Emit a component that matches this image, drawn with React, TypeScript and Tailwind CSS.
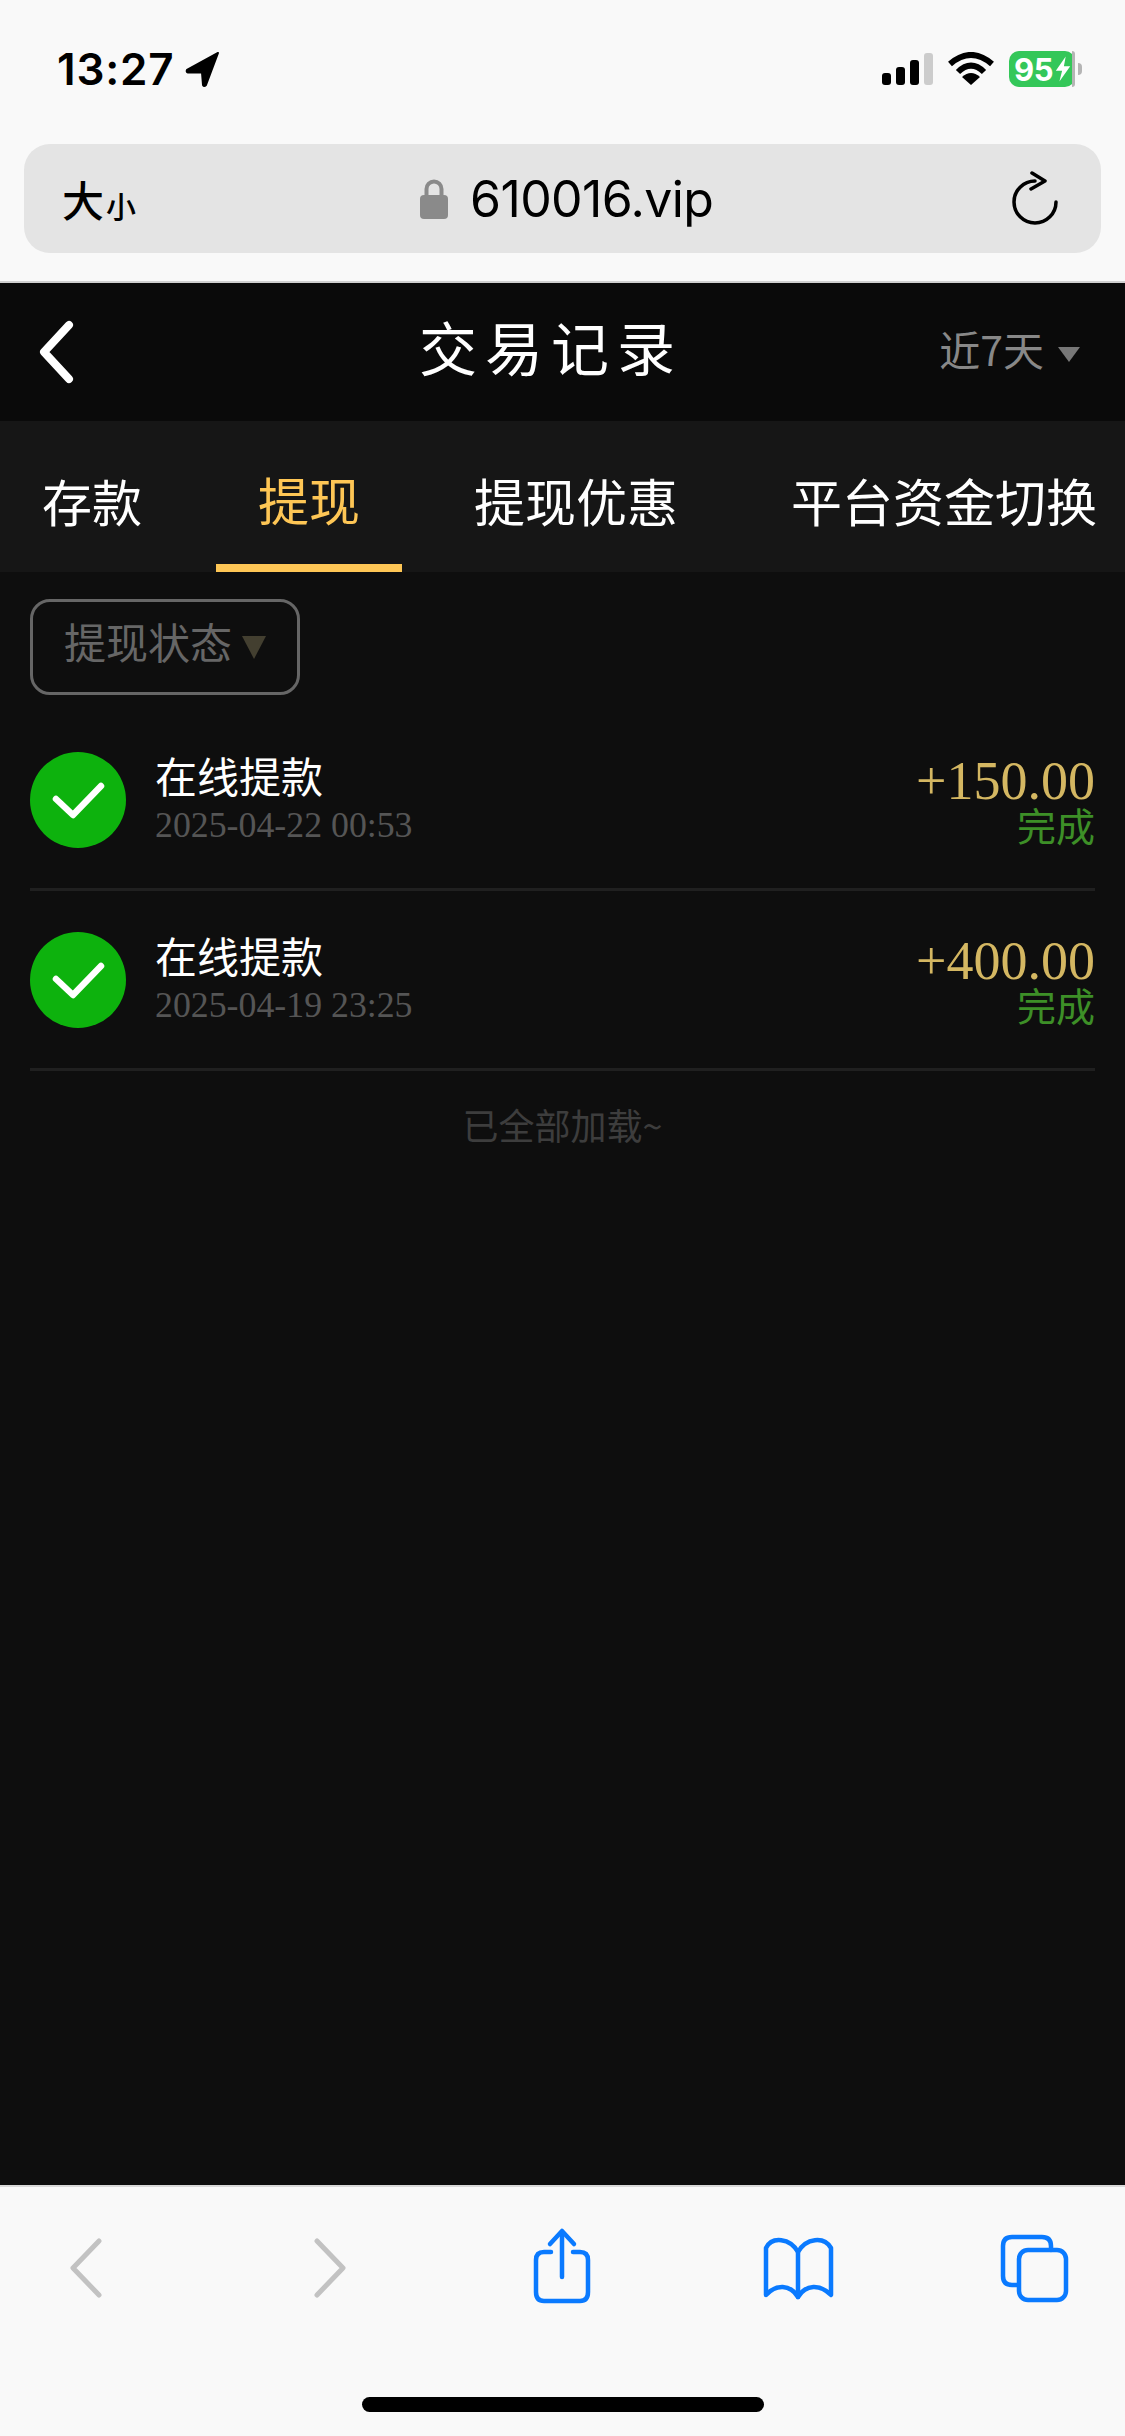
import React from "react";

const SANS = "font-['Noto_Sans_CJK_SC',sans-serif]";
const SERIF = "font-['Liberation_Serif','Noto_Sans_CJK_SC',serif]";

function StatusBar() {
  return (
    <div className="h-[144px] flex justify-between items-start pl-[57px] pr-[43px] pt-[51px]">
      <div className="flex items-center h-[36px] gap-[11px]">
        <span className="font-['Inter',sans-serif] text-[44px] leading-none font-semibold text-black tracking-[0.8px]">13:27</span>
        <svg width="36" height="36" viewBox="0 0 36 36" className="block">
          <path d="M33 2 L2 19 Q1 21 3 21.5 L17 21.5 L18 34 Q19 36 21 34 Z" fill="#000" stroke="#000" strokeWidth="2" strokeLinejoin="round" />
        </svg>
      </div>
      <div className="flex items-center h-[36px]">
        <svg width="52" height="34" viewBox="0 0 52 34" className="block mr-[15px]">
          <rect x="1" y="21" width="9" height="12" rx="3" fill="#000" />
          <rect x="15" y="15" width="9" height="18" rx="3" fill="#000" />
          <rect x="29" y="8" width="9" height="25" rx="3" fill="#000" />
          <rect x="43" y="1" width="9" height="32" rx="3" fill="#ccc" />
        </svg>
        <svg width="46" height="34" viewBox="0 0 46 34" className="block mr-[15px]">
          <path d="M2 12 Q23 -6 44 12" fill="none" stroke="#000" strokeWidth="6" />
          <path d="M10 20 Q23 7 36 20" fill="none" stroke="#000" strokeWidth="6" />
          <path d="M23 33 L14 25 Q23 17 32 25 Z" fill="#000" />
        </svg>
        <div className="relative w-[66px] h-[36px] rounded-[10px] bg-[#34c759] flex items-center pl-[5px]">
          <span className="font-['Inter',sans-serif] font-bold text-[31px] leading-none text-white tracking-[-0.5px]">95</span>
          <svg width="18" height="30" viewBox="0 0 20 30" className="block ml-[1px]">
            <path d="M13 1 L2 17 L9 17 L6 29 L18 12 L11 12 Z" fill="#fff" />
          </svg>
          <div className="absolute right-0 top-0 w-[3px] h-full rounded-r-[10px] bg-[#b5b5b5]" />
        </div>
        <div className="w-[4px] h-[12px] ml-[3px] rounded-r-full bg-[#b5b5b5]" />
      </div>
    </div>
  );
}

function UrlBar() {
  return (
    <div className="mx-[24px] h-[109px] rounded-[26px] bg-[#e4e4e4] flex items-center justify-between pl-[38px] pr-[42px] relative">
      <div className={`flex items-end text-black ${SANS} font-medium`}>
        <span className="text-[42px] leading-none">大</span>
        <span className="text-[30px] leading-none ml-[2px]">小</span>
      </div>
      <div className="flex items-center gap-[21px] absolute left-[395px] top-[27px]">
        <svg width="30" height="42" viewBox="0 0 30 42" className="block">
          <path d="M7.5 20 V11 a7.5 7.5 0 0 1 15 0 V20" fill="none" stroke="#8a8a8a" strokeWidth="4" />
          <rect x="1" y="17" width="28" height="24" rx="4" fill="#8a8a8a" />
        </svg>
        <span className="font-['Inter',sans-serif] text-[50px] leading-[56px] text-black tracking-[-0.6px]">610016.vip</span>
      </div>
      <svg width="48" height="56" viewBox="0 0 48 56" className="block">
        <path d="M45 31 A21 21 0 1 1 24 10" fill="none" stroke="#000" strokeWidth="3.5" strokeLinecap="round" />
        <path d="M21 2 L34 10 L20 18" fill="none" stroke="#000" strokeWidth="3.5" strokeLinecap="round" strokeLinejoin="round" />
      </svg>
    </div>
  );
}

function Header() {
  return (
    <div className={`h-[138px] bg-[#0a0a0a] flex items-center justify-between pl-[37px] pr-[45px] relative ${SANS}`}>
      <svg width="40" height="64" viewBox="0 0 40 64" className="block">
        <path d="M32 5 L7 32 L32 59" fill="none" stroke="#fff" strokeWidth="8" strokeLinecap="round" strokeLinejoin="round" />
      </svg>
      <span className="absolute left-[419px] top-[27px] text-[58px] leading-[72px] text-white tracking-[8px] font-normal">交易记录</span>
      <div className="flex items-center gap-[14px]">
        <span className="text-[41px] leading-[56px] text-[#888] mb-[8px]">近7天</span>
        <svg width="22" height="16" viewBox="0 0 22 16" className="block mt-[4px]">
          <path d="M0 1 H22 L11 16 Z" fill="#777" />
        </svg>
      </div>
    </div>
  );
}

function Tabs() {
  return (
    <div className={`h-[151px] bg-[#161616] relative flex items-center text-[51px] leading-[64px] text-white ${SANS}`}>
      <span className="ml-[42px] w-[174px] shrink-0 mt-[6px] text-[50px]">存款</span>
      <div className="w-[186px] shrink-0 h-full flex items-center justify-center text-[#fec655] border-b-[8px] border-[#fec655]">
        <span className="translate-y-[6px]">提现</span>
      </div>
      <span className="ml-[72px] shrink-0 mt-[6px]">提现优惠</span>
      <span className="ml-[113px] shrink-0 mt-[6px]">平台资金切换</span>
    </div>
  );
}

function Row({ date, amount }: { date: string; amount: string }) {
  return (
    <div className="mx-[30px] h-[180px] border-b-[3px] border-[#202020] flex items-start pt-[41px] justify-between">
      <div className="flex items-start">
        <div className="w-[96px] h-[96px] rounded-full bg-[#0db20d]">
          <svg width="96" height="96" viewBox="0 0 96 96" className="block">
            <path d="M26 47 L43 63 L71 34" fill="none" stroke="#fff" strokeWidth="6.5" strokeLinecap="round" strokeLinejoin="round" />
          </svg>
        </div>
        <div className="ml-[29px] mt-[1px] flex flex-col">
          <span className={`${SANS} text-[42px] leading-[44px] text-white`}>在线提款</span>
          <span className={`${SERIF} text-[35.8px] leading-[36px] text-[#555] mt-[10px]`}>{date}</span>
        </div>
      </div>
      <div className="flex flex-col items-end mt-[7px]">
        <span className={`${SERIF} text-[54px] leading-[44px] text-[#d4b762]`}>{amount}</span>
        <span className={`${SANS} text-[39px] leading-[38px] text-[#3d8f27] mt-[2px]`}>完成</span>
      </div>
    </div>
  );
}

function Toolbar() {
  return (
    <div className="h-[251px] bg-[#f9f9f9] border-t-[2px] border-[#d9d9d9] relative flex flex-col">
      <div className="h-[205px] relative">
        <svg width="1125" height="205" viewBox="0 2187 1125 205" className="block">
          <g fill="none" strokeLinecap="round" strokeLinejoin="round">
            <path d="M99 2241 L73 2268 L99 2295" stroke="#c2c2c2" strokeWidth="5" />
            <path d="M317 2241 L343 2268 L317 2295" stroke="#c2c2c2" strokeWidth="5" />
            <g stroke="#0a7aff" strokeWidth="4.5">
              <path d="M551 2252 H544 Q536 2252 536 2260 V2292 Q536 2301 544 2301 H580 Q588 2301 588 2292 V2260 Q588 2252 580 2252 H573" />
              <path d="M562 2277 V2232" />
              <path d="M550 2244 L562 2231 L574 2244" />
              <path d="M798 2252 C790 2238 772 2236 766 2248 V2295 C776 2284 790 2284 798 2297 C806 2284 820 2284 831 2295 V2248 C824 2236 806 2238 798 2252 Z" />
              <path d="M798 2252 V2297" />
              <path d="M1017 2285 H1012 Q1003 2285 1003 2276 V2246 Q1003 2237 1012 2237 H1042 Q1051 2237 1051 2246 V2250" />
              <rect x="1019" y="2250" width="47" height="50" rx="9" />
            </g>
          </g>
        </svg>
      </div>
      <div className="mx-auto w-[402px] h-[15px] rounded-full bg-black mt-[5px]" />
    </div>
  );
}

export default function App() {
  return (
    <div className="w-[1125px] h-[2436px] flex flex-col bg-[#0e0e0e] overflow-hidden">
      <div className="h-[283px] shrink-0 bg-[#f9f9f9] border-b-[2px] border-[#d0d0d0]">
        <StatusBar />
        <UrlBar />
      </div>
      <Header />
      <Tabs />
      <div className="flex-1 flex flex-col">
        <div className="ml-[30px] mt-[27px] w-[270px] h-[96px] rounded-[20px] border-[3px] border-[#666] flex items-center pl-[31px]">
          <span className={`${SANS} text-[42px] leading-[56px] text-[#666] mb-[12px]`}>提现状态</span>
          <svg width="24" height="24" viewBox="0 0 24 24" className="block ml-[10px] mt-[-1px]">
            <path d="M0 1 H24 L12 24 Z" fill="#433f30" />
          </svg>
        </div>
        <div className="mt-[16px]">
          <Row date="2025-04-22 00:53" amount="+150.00" />
          <Row date="2025-04-19 23:25" amount="+400.00" />
        </div>
        <div className={`mt-[29px] text-center ${SANS} text-[36px] leading-[48px] text-[#3d3d3d]`}>已全部加载~</div>
      </div>
      <Toolbar />
    </div>
  );
}
